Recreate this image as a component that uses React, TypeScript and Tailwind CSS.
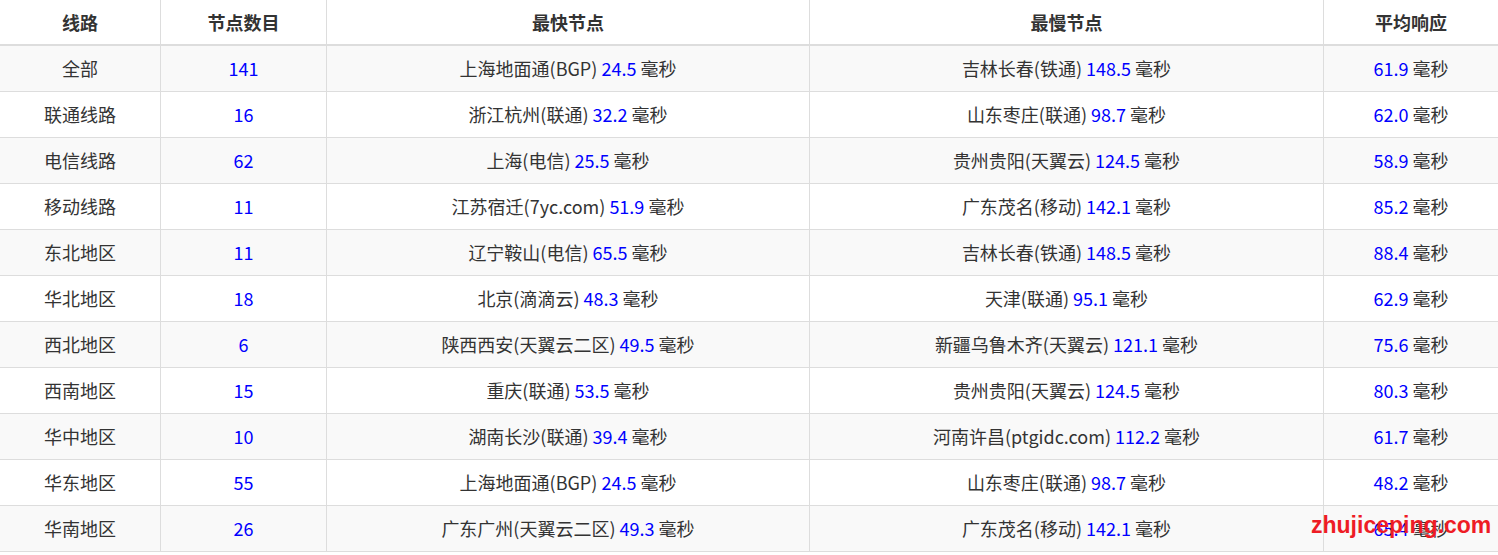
import React from 'react';

const rows: [string, string, string, string, string, string, string][] = [
  ['全部', '141', '上海地面通(BGP)', '24.5', '吉林长春(铁通)', '148.5', '61.9'],
  ['联通线路', '16', '浙江杭州(联通)', '32.2', '山东枣庄(联通)', '98.7', '62.0'],
  ['电信线路', '62', '上海(电信)', '25.5', '贵州贵阳(天翼云)', '124.5', '58.9'],
  ['移动线路', '11', '江苏宿迁(7yc.com)', '51.9', '广东茂名(移动)', '142.1', '85.2'],
  ['东北地区', '11', '辽宁鞍山(电信)', '65.5', '吉林长春(铁通)', '148.5', '88.4'],
  ['华北地区', '18', '北京(滴滴云)', '48.3', '天津(联通)', '95.1', '62.9'],
  ['西北地区', '6', '陕西西安(天翼云二区)', '49.5', '新疆乌鲁木齐(天翼云)', '121.1', '75.6'],
  ['西南地区', '15', '重庆(联通)', '53.5', '贵州贵阳(天翼云)', '124.5', '80.3'],
  ['华中地区', '10', '湖南长沙(联通)', '39.4', '河南许昌(ptgidc.com)', '112.2', '61.7'],
  ['华东地区', '55', '上海地面通(BGP)', '24.5', '山东枣庄(联通)', '98.7', '48.2'],
  ['华南地区', '26', '广东广州(天翼云二区)', '49.3', '广东茂名(移动)', '142.1', '65.4'],
];

const cols = ['w-[161px]', 'w-[166px]', 'w-[483px]', 'w-[514px]', 'flex-1'];

const Ms = ({ v }: { v: string }) => (
  <>
    <span className="text-[#0000ff]">{v}</span> 毫秒
  </>
);

export default function App() {
  const font = { fontFamily: '"Noto Sans CJK SC", "Noto Sans", sans-serif' };
  return (
    <div className="relative w-[1498px] h-[555px] bg-white text-[#333] text-[18px] overflow-hidden" style={font}>
      <div className="flex h-[46px] border-b-2 border-[#ddd] font-bold">
        {['线路', '节点数目', '最快节点', '最慢节点', '平均响应'].map((h, i) => (
          <div key={h} className={`${cols[i]} flex items-center justify-center ${i < 4 ? 'border-r border-[#ddd]' : ''}`}>{h}</div>
        ))}
      </div>
      {rows.map((r, idx) => {
        const cells = [
          r[0],
          <span className="text-[#0000ff]">{r[1]}</span>,
          <>{r[2]} <Ms v={r[3]} /></>,
          <>{r[4]} <Ms v={r[5]} /></>,
          <Ms v={r[6]} />,
        ];
        return (
          <div key={idx} className={`flex h-[46px] border-b border-[#ddd] ${idx % 2 === 0 ? 'bg-[#f9f9f9]' : 'bg-white'}`}>
            {cells.map((c, i) => (
              <div key={i} className={`${cols[i]} flex items-center justify-center whitespace-pre ${i < 4 ? 'border-r border-[#ddd]' : ''}`}>{c}</div>
            ))}
          </div>
        );
      })}
      <div className="absolute left-[1311px] top-[514px] text-[#ee1c25] text-[23px] font-bold leading-none" style={{ fontFamily: '"Liberation Sans", Arial, sans-serif' }}>
        zhujiceping.com
      </div>
    </div>
  );
}
